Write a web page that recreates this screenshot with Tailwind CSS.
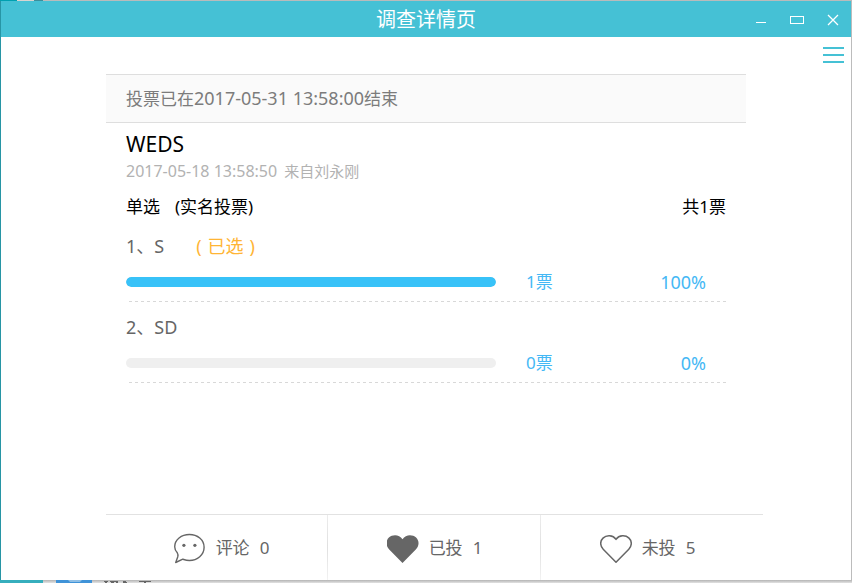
<!DOCTYPE html>
<html lang="zh-CN">
<head>
<meta charset="utf-8">
<title>调查详情页</title>
<script src="https://cdn.jsdelivr.net/npm/@tailwindcss/browser@4"></script>
</head>
<body class="flex h-screen flex-col overflow-hidden bg-[#b9bbbb] font-['Noto_Sans','Noto_Sans_CJK_SC',sans-serif] text-[17px]">

<!-- desktop visible above the window -->
<div class="flex h-px shrink-0">
  <span class="w-[17px] bg-[#00a0b0]"></span><span class="w-[17px] bg-[#d8d4d0]"></span><span class="w-[9px] bg-[#3a8f9c]"></span>
</div>

<div class="flex min-h-0 flex-1 flex-col border-x border-l-[#2795a5] border-r-[#bcbcbc] bg-white">
  <header class="relative flex h-9 shrink-0 items-center justify-center bg-[#45c1d5]">
    <h1 class="pt-[2px] text-[20px] leading-8 text-white">调查详情页</h1>
    <div class="absolute inset-y-0 right-3 flex items-center gap-[23px] pt-px">
      <button type="button" aria-label="最小化"><svg class="block h-[14px] w-[12px]" viewBox="0 0 12 14"><path d="M1 9.5h10" stroke="#fff"/></svg></button>
      <button type="button" aria-label="最大化"><svg class="block h-[14px] w-[14px]" viewBox="0 0 14 14"><rect x=".5" y="3.5" width="13" height="7" fill="none" stroke="#fff"/></svg></button>
      <button type="button" aria-label="关闭"><svg class="block h-[14px] w-[12px]" viewBox="0 0 12 14"><path d="M1 2l10 10M11 2L1 12" stroke="#fff" stroke-width="1.3"/></svg></button>
    </div>
  </header>

  <main class="relative flex min-h-0 flex-1 flex-col">
    <button type="button" aria-label="菜单" class="absolute top-[10px] right-[7px] flex w-[21px] flex-col gap-[5px]">
      <span class="h-[2px] bg-[#45c1d5]"></span><span class="h-[2px] bg-[#45c1d5]"></span><span class="h-[2px] bg-[#45c1d5]"></span>
    </button>

    <div class="mx-auto flex w-full max-w-[640px] flex-1 flex-col pt-[37px]">
      <p class="border-y border-[#dedede] bg-[#fafafa] px-5 leading-[47px] text-[#7c7c7c]">投票已在<time class="text-[18px]">2017-05-31 13:58:00</time>结束</p>

      <section class="px-5 pt-[7px]">
        <h2 class="text-[21px] leading-7 text-black">WEDS</h2>
        <p class="flex gap-[7px] text-[15px] leading-[26px] text-[#b2b2b2]"><time class="text-[16px]">2017-05-18 13:58:50</time><span>来自刘永刚</span></p>
        <div class="mt-[11px] flex justify-between leading-6 text-black">
          <p class="flex gap-[15px]"><span>单选</span><span>(实名投票)</span></p>
          <p>共1票</p>
        </div>

        <ol class="mt-[2px]">
          <li class="pt-[13px]">
            <h3 class="flex gap-8 text-[18px] leading-6 text-[#666]"><span>1、S</span><span class="flex gap-[6px] text-[#ffb535]"><span>(</span><span>已选</span><span>)</span></span></h3>
            <div class="mt-3 mb-[7px] flex items-center leading-6 text-[#45b8f5]">
              <div class="h-[10px] w-[370px] shrink overflow-hidden rounded-full bg-[#efefef]"><div class="h-full rounded-full bg-[#38c2f8]" style="width:100%"></div></div>
              <span class="ml-[30px]">1票</span>
              <span class="ml-auto pr-5 text-[18px]">100%</span>
            </div>
            <div class="h-px bg-[repeating-linear-gradient(90deg,transparent_0_3px,#d8d8d8_3px_6px)]"></div>
          </li>
          <li class="pt-[13px]">
            <h3 class="text-[18px] leading-6 text-[#666]">2、SD</h3>
            <div class="mt-3 mb-[7px] flex items-center leading-6 text-[#45b8f5]">
              <div class="h-[10px] w-[370px] shrink overflow-hidden rounded-full bg-[#efefef]"><div class="h-full rounded-full bg-[#38c2f8]" style="width:0%"></div></div>
              <span class="ml-[30px]">0票</span>
              <span class="ml-auto pr-5 text-[18px]">0%</span>
            </div>
            <div class="h-px bg-[repeating-linear-gradient(90deg,transparent_0_3px,#d8d8d8_3px_6px)]"></div>
          </li>
        </ol>
      </section>

      <nav class="mt-auto -mr-[17px] flex h-[66px] border-t border-[#e2e2e2] px-[9px] leading-6 text-[#666]">
        <a href="#" class="flex flex-1 items-center justify-center gap-[10px]">
          <svg class="h-8 w-8" viewBox="0 0 32 32" fill="none" stroke="#666" stroke-width="1.4" stroke-linejoin="round"><path d="M3.300 20.800C1.400 18.700 .7 16.500 .7 14.700C.7 7.700 7.400 2.500 15.400 2.500S30.100 7.700 30.100 15.300S23.400 28.500 15.400 28.500C12.900 28.500 10.700 27.800 8.800 27.200L1.700 30.500L3.700 25Q4.400 22.500 3.300 20.800Z"/><g fill="#666" stroke="none"><circle cx="9.900" cy="13.300" r="1.600"/><circle cx="20.900" cy="13.300" r="1.600"/></g></svg>
          <span>评论</span><span>0</span>
        </a>
        <span class="-ml-px w-px bg-linear-to-b from-[#ececec] via-[#e0e0e0] to-[#f2f2f2]"></span>
        <a href="#" class="flex flex-1 items-center justify-center gap-[10px]">
          <svg class="h-8 w-8" viewBox="0 0 32 32" fill="#666"><path d="M15.500 31L2.200 17.500C-1.400 13.800-1.400 8.800 1.900 5.600C5.500 2.200 12.200 2.200 15.500 7.200C18.800 2.200 25.500 2.200 29.100 5.600C32.400 8.800 32.400 13.800 28.800 17.500Z"/></svg>
          <span>已投</span><span>1</span>
        </a>
        <span class="-ml-px w-px bg-linear-to-b from-[#ececec] via-[#e0e0e0] to-[#f2f2f2]"></span>
        <a href="#" class="flex flex-1 items-center justify-center gap-[10px]">
          <svg class="h-8 w-8" viewBox="0 0 32 32" fill="none" stroke="#666" stroke-width="1.500" stroke-linejoin="round"><path d="M16 30.300L3.200 17.300C-.1 13.800-.1 9.100 3 6.100C6.300 3 12.800 2.700 16 7.400C19.200 2.700 25.700 3 29 6.100C32.100 9.100 32.100 13.800 28.800 17.300Z"/></svg>
          <span>未投</span><span>5</span>
        </a>
      </nav>
    </div>
  </main>
</div>

<!-- desktop visible below the window -->
<div class="h-[3px] shrink-0 bg-linear-to-b from-[#b4b4b4] to-[#e2e2e2]">
  <svg class="block h-[3px] w-[300px]" viewBox="0 0 300 3"><path fill="#36aebd" d="M0 0h43v3H0z"/><path fill="#3f93d8" d="M56 0h36v3H56z"/><path fill="#8fbfe6" d="M68 0h14l-2 2H70z"/><path stroke="#666" d="M104 1.500h4m2 0h8m5 0h3m13 0h12M105 2.500h2m4 0h3m2 0h2m5 0h4m17 0h2"/></svg>
</div>
</body>
</html>
